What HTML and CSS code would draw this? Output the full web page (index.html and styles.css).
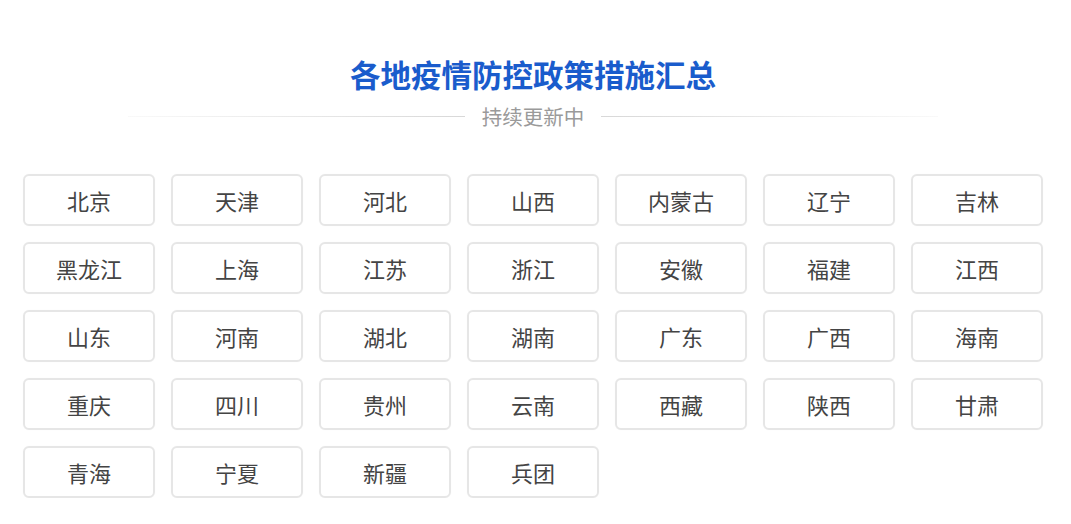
FILE: index.html
```html
<!DOCTYPE html>
<html lang="zh-CN">
<head>
    <meta charset="UTF-8">
    <meta name="viewport" content="width=device-width, initial-scale=1.0">
    <title>各地疫情防控政策措施汇总</title>
    <link rel="stylesheet" href="styles.css">
</head>
<body>
    <div class="wrap">
        <h2 class="title">各地疫情防控政策措施汇总</h2>
        <div class="sub">
            <span class="line left"></span>
            <span class="sub-text">持续更新中</span>
            <span class="line right"></span>
        </div>
        <div class="areas">
            <a class="area">北京</a>
            <a class="area">天津</a>
            <a class="area">河北</a>
            <a class="area">山西</a>
            <a class="area">内蒙古</a>
            <a class="area">辽宁</a>
            <a class="area">吉林</a>
            <a class="area">黑龙江</a>
            <a class="area">上海</a>
            <a class="area">江苏</a>
            <a class="area">浙江</a>
            <a class="area">安徽</a>
            <a class="area">福建</a>
            <a class="area">江西</a>
            <a class="area">山东</a>
            <a class="area">河南</a>
            <a class="area">湖北</a>
            <a class="area">湖南</a>
            <a class="area">广东</a>
            <a class="area">广西</a>
            <a class="area">海南</a>
            <a class="area">重庆</a>
            <a class="area">四川</a>
            <a class="area">贵州</a>
            <a class="area">云南</a>
            <a class="area">西藏</a>
            <a class="area">陕西</a>
            <a class="area">甘肃</a>
            <a class="area">青海</a>
            <a class="area">宁夏</a>
            <a class="area">新疆</a>
            <a class="area">兵团</a>
        </div>
    </div>
</body>
</html>
```

FILE: styles.css
```css
body{
    margin: 0;
    background: #fff;
    font-family: "Noto Sans CJK SC", "Noto Sans", sans-serif;
}
.wrap{
    width: 1020px;
    margin-left: 23px;
    padding-top: 54px;
}
.title{
    margin: 0;
    text-align: center;
    font-size: 30.5px;
    line-height: 40px;
    font-weight: 700;
    color: #1a5ccc;
}
.sub{
    display: flex;
    align-items: center;
    justify-content: center;
    margin-top: 8px;
    height: 28px;
}
.sub-text{
    font-size: 20.5px;
    color: #9a9a9a;
    margin: 0 17px;
}
.line{
    height: 1px;
    width: 337px;
}
.line.left{
    background: linear-gradient(to right, rgba(225,225,225,0.2), #d8d8d8);
}
.line.right{
    background: linear-gradient(to left, rgba(225,225,225,0.2), #d8d8d8);
}
.areas{
    display: grid;
    grid-template-columns: repeat(7, 132px);
    gap: 16px;
    margin-top: 44px;
}
.area{
    height: 52px;
    box-sizing: border-box;
    border: 2px solid #e6e6e6;
    border-radius: 6px;
    box-shadow: 0 0 1px rgba(0,0,0,0.06);
    display: flex;
    align-items: center;
    justify-content: center;
    font-size: 22px;
    color: #444;
    cursor: pointer;
}
```
